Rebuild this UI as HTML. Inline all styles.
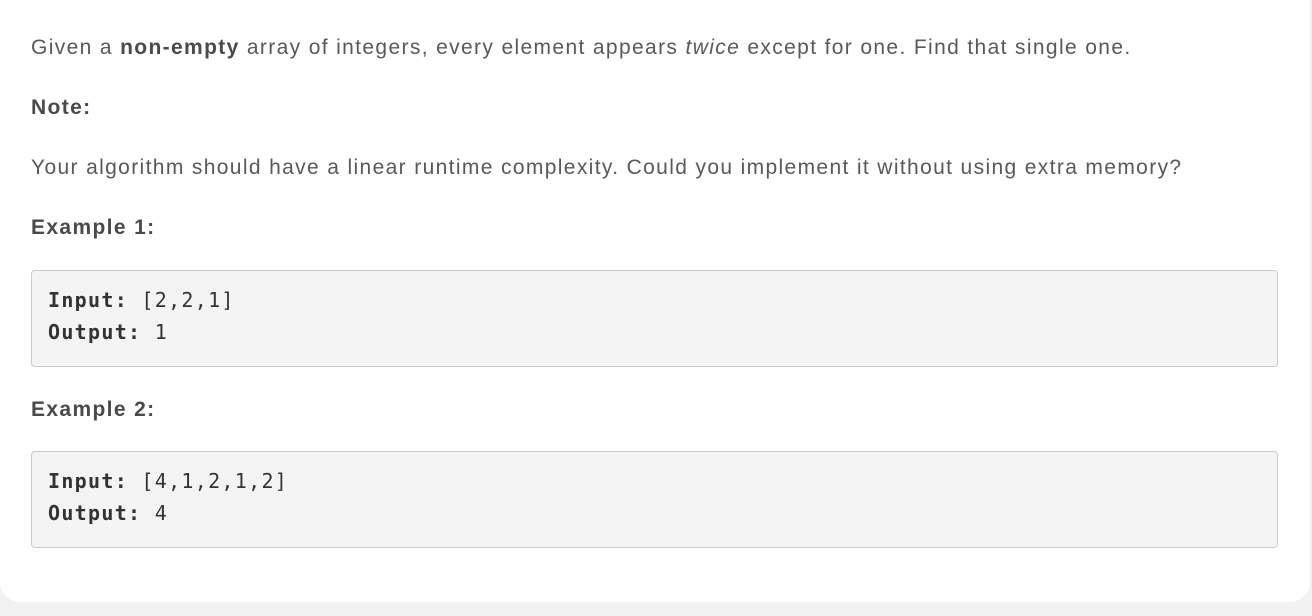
<!DOCTYPE html>
<html><head><style>
body{margin:0;background:#f2f2f2;width:1312px;height:616px;overflow:hidden;font-family:"Liberation Sans",sans-serif;color:#595959}
.card{position:absolute;left:0;top:0;width:1310px;height:602px;background:#fff;border-radius:0 0 20px 20px}
.t{position:absolute;left:31px;font-size:21px;letter-spacing:1.36px;line-height:24px;white-space:nowrap}
b{color:#4a4a4a}
.code{position:absolute;left:31px;width:1245px;height:95px;background:#f4f4f4;border:1px solid #ccc;border-radius:4px}
.code div{position:absolute;left:16px;font-family:"DejaVu Sans Mono","Liberation Mono",monospace;font-size:20px;letter-spacing:1.3px;color:#333;white-space:pre}
.code b{color:#333}
</style></head><body>
<div class="card">
<div class="t" style="top:36px">Given a <b>non-empty</b> array of integers, every element appears <i>twice</i> except for one. Find that single one.</div>
<div class="t" style="top:96px"><b>Note:</b></div>
<div class="t" style="top:156px">Your algorithm should have a linear runtime complexity. Could you implement it without using extra memory?</div>
<div class="t" style="top:216px"><b>Example 1:</b></div>
<div class="code" style="top:270px"><div style="top:17px"><b>Input:</b> [2,2,1]</div><div style="top:49px"><b>Output:</b> 1</div></div>
<div class="t" style="top:398px"><b>Example 2:</b></div>
<div class="code" style="top:451px"><div style="top:17px"><b>Input:</b> [4,1,2,1,2]</div><div style="top:49px"><b>Output:</b> 4</div></div>
</div>
</body></html>
